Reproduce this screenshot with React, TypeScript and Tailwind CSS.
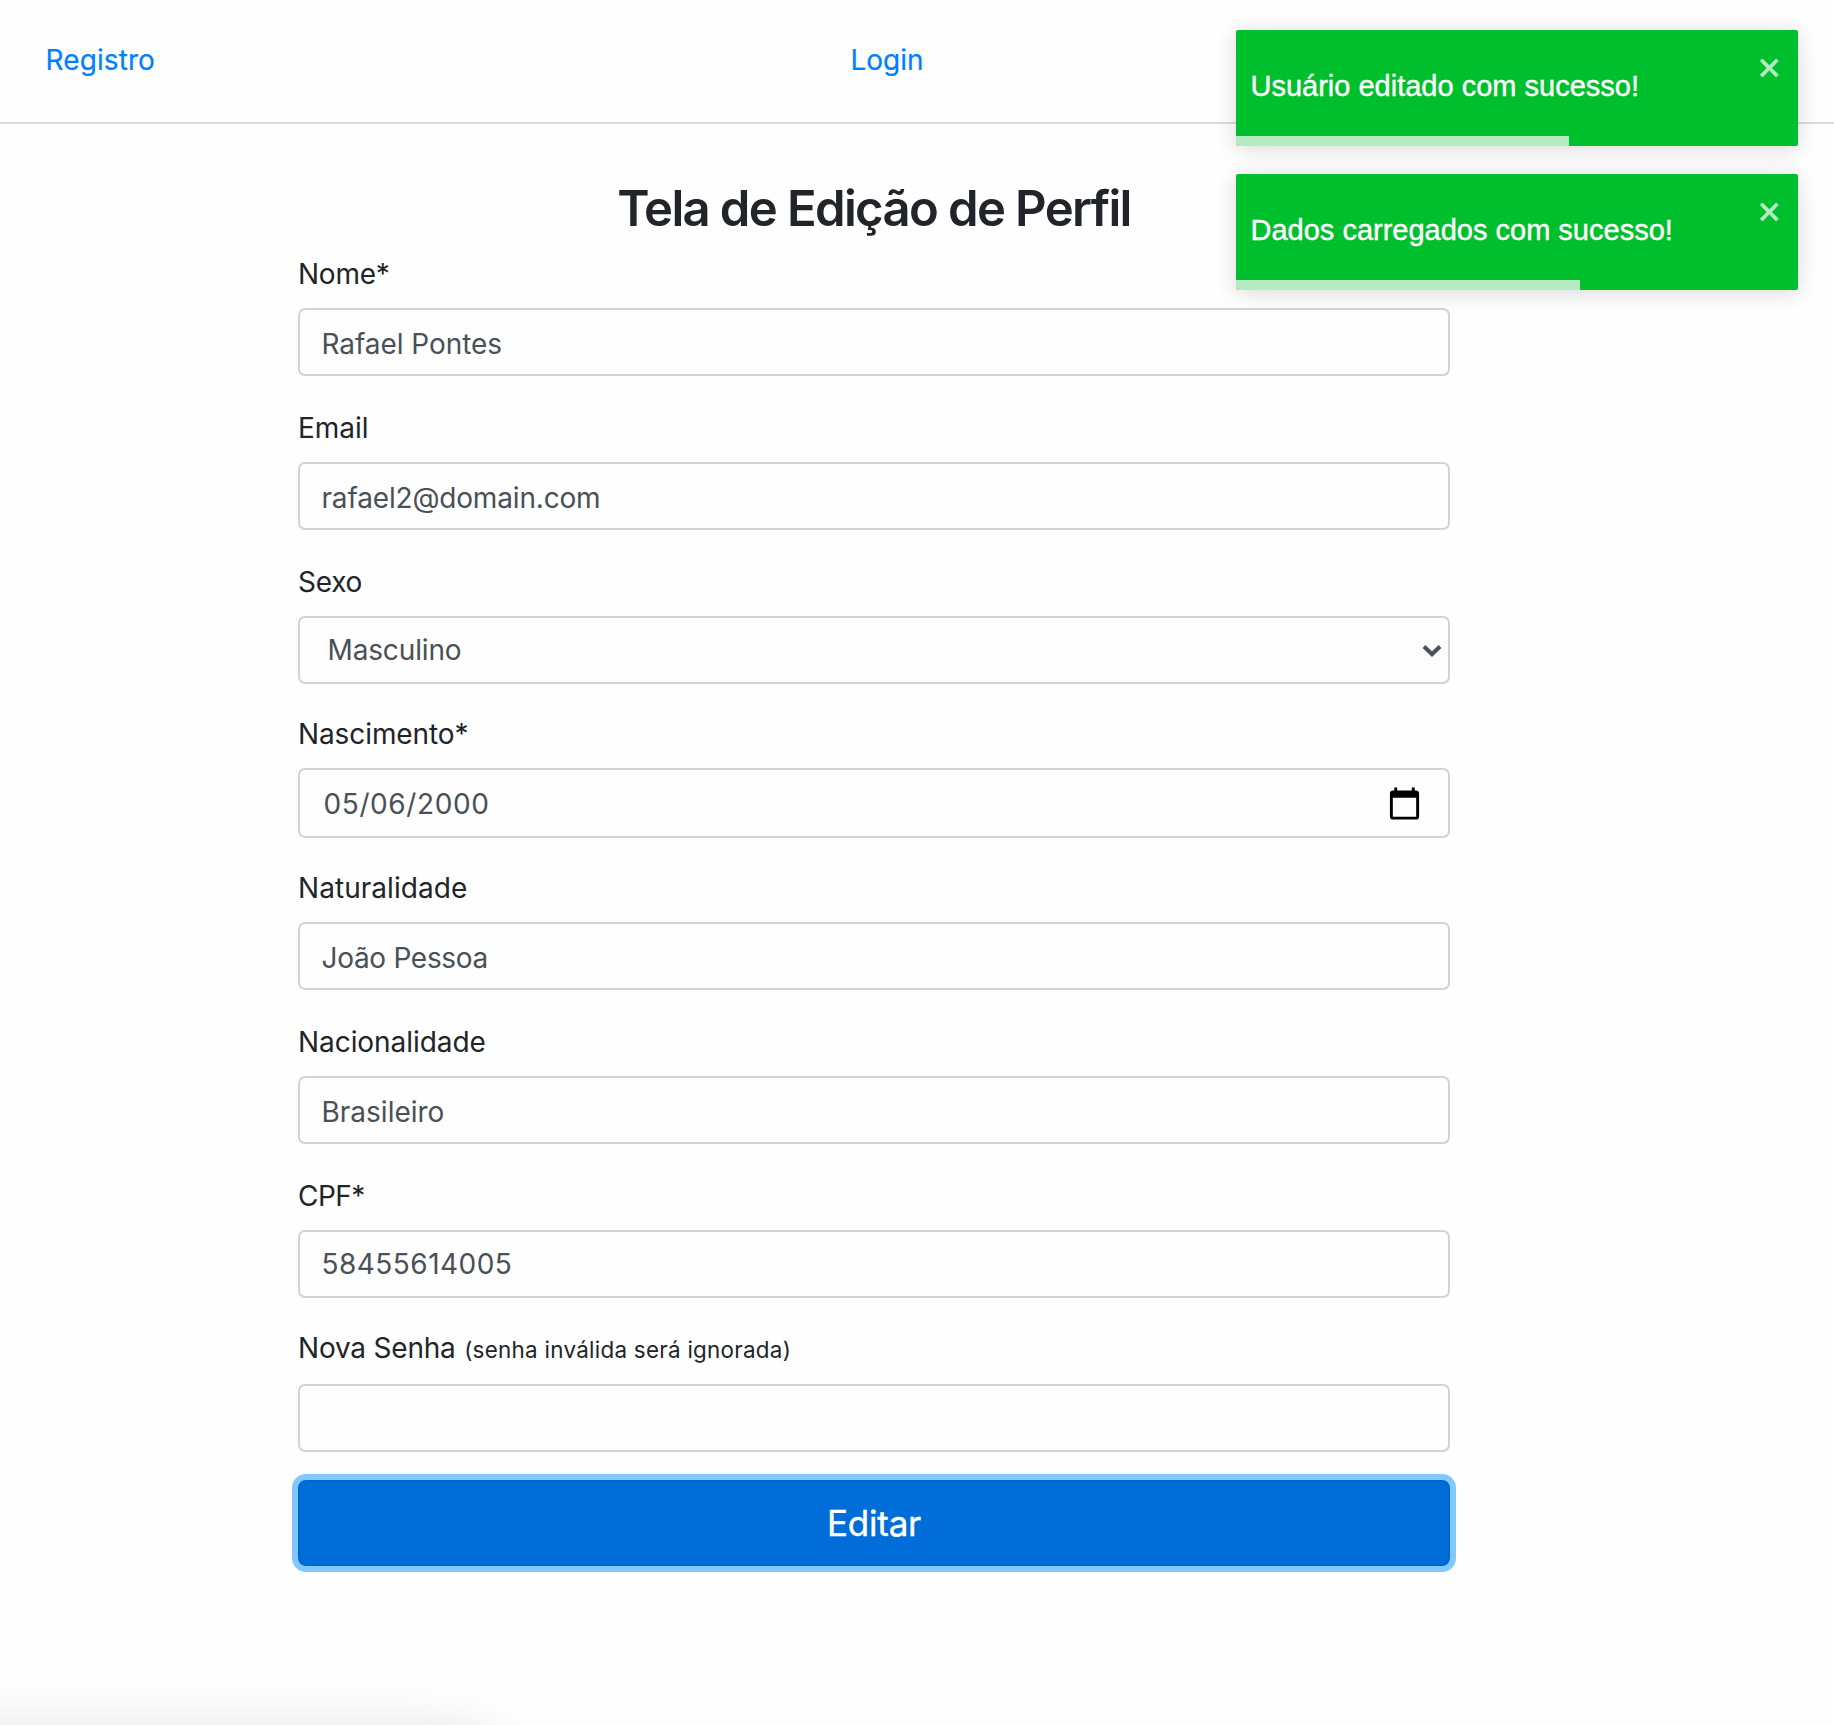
type Field = {
  label: string;
  note?: string;
  value: string;
  kind?: "select" | "date";
  labelClass: string;
  boxClass: string;
};

const fields: Field[] = [
  { label: "Nome*", value: "Rafael Pontes", labelClass: "mb-[13px] tracking-[-0.25px]", boxClass: "h-[68px] pt-[3px] mb-[31px] tracking-[-0.06px]" },
  { label: "Email", value: "rafael2@domain.com", labelClass: "mb-[13px]", boxClass: "h-[68px] pt-[3px] mb-[31px] tracking-[-0.17px]" },
  { label: "Sexo", value: "Masculino", kind: "select", labelClass: "mb-[13px] tracking-[-0.25px]", boxClass: "h-[68px] mb-[29px] pl-[27.5px] tracking-[-0.14px]" },
  { label: "Nascimento*", value: "05/06/2000", kind: "date", labelClass: "mb-[13px] tracking-[-0.1px]", boxClass: "h-[70px] pt-[2px] mb-[29px] pl-[23.5px] tracking-[0.6px]" },
  { label: "Naturalidade", value: "João Pessoa", labelClass: "mb-[13px] tracking-[0.05px]", boxClass: "h-[68px] pt-[3px] mb-[31px] tracking-[-0.3px]" },
  { label: "Nacionalidade", value: "Brasileiro", labelClass: "mb-[13px] tracking-[-0.06px]", boxClass: "h-[68px] pt-[3px] mb-[31px]" },
  { label: "CPF*", value: "58455614005", labelClass: "mb-[13px] tracking-[-0.5px]", boxClass: "h-[68px] mb-[29px] tracking-[0.47px]" },
  { label: "Nova Senha", note: "(senha inválida será ignorada)", value: "", labelClass: "mb-[15px] tracking-[-0.2px]", boxClass: "h-[68px] mb-[28px]" },
];

function CloseIcon() {
  return (
    <svg viewBox="0 0 14 16" className="h-[29px] w-[25.4px] fill-white opacity-70">
      <path d="M7.71 8.23l3.75 3.75-1.48 1.48-3.75-3.75-3.75 3.75L1 11.98l3.75-3.75L1 4.48 2.48 3l3.75 3.75L9.98 3l1.48 1.48-3.75 3.75z" />
    </svg>
  );
}

function ChevronIcon() {
  return (
    <svg viewBox="0 0 20 14" className="mr-[6px] mt-px h-[14px] w-5 fill-none stroke-[#495057]" strokeWidth="4">
      <path d="M2 2.5l8 7.8 8-7.8" />
    </svg>
  );
}

function CalendarIcon() {
  return (
    <svg viewBox="0 0 24 24" className="mb-[1.5px] mr-[26.5px] h-[35px] w-[35px] fill-black">
      <path d="M20 3h-1V1h-2v2H7V1H5v2H4c-1.1 0-2 .9-2 2v16c0 1.1.9 2 2 2h16c1.1 0 2-.9 2-2V5c0-1.1-.9-2-2-2zm0 18H4V8h16v13z" />
    </svg>
  );
}

function Toast({ text, barClass }: { text: string; barClass: string }) {
  return (
    <div className="relative flex h-[116px] items-start justify-between overflow-hidden rounded-[2px] bg-[#00bf2c] pl-[14.5px] pr-[14.5px]">
      <span className="mt-[35px] font-['Liberation_Sans',Arial,sans-serif] text-[29px] leading-[42px] text-white [-webkit-text-stroke:0.4px_white]">
        {text}
      </span>
      <button type="button" aria-label="close" className="mt-[22.5px]">
        <CloseIcon />
      </button>
      <div className={"absolute bottom-0 left-0 h-[10px] bg-white/70 " + barClass} />
    </div>
  );
}

export default function App() {
  return (
    <div className="relative h-[1725px] w-[1834px] overflow-hidden bg-[#fefefe] font-[Inter,sans-serif] text-[28px] leading-[42px] text-[#212529]">
      <header className="flex h-[124px] items-start border-b-2 border-[#dcdcdc] px-[45.5px] pt-[39px] text-[#007fff] [-webkit-text-stroke:0.2px_#007fff]">
        <a className="w-[805px] tracking-[0.1px]">Registro</a>
        <a>Login</a>
      </header>

      <main className="ml-[298px] w-[1152px] pt-[55px]">
        <h3 className="mb-[15px] text-center text-[49px] font-semibold leading-[59px] tracking-[-1.62px]">
          Tela de Edição de Perfil
        </h3>
        <form>
          {fields.map((f) => (
            <div key={f.label}>
              <label className={"flex h-[42px] items-baseline " + f.labelClass}>
                {f.label}
                {f.note && <small className="ml-[8.5px] text-[22.4px] tracking-[0.28px]">{f.note}</small>}
              </label>
              <div
                className={
                  "flex items-center rounded-[7px] border-2 border-[#ced4da] bg-[#fefefe] text-[#495057] " +
                  (f.kind ? "" : "pl-[21.5px] ") +
                  f.boxClass
                }
              >
                <span className="grow">{f.value}</span>
                {f.kind === "select" && <ChevronIcon />}
                {f.kind === "date" && <CalendarIcon />}
              </div>
            </div>
          ))}
          <button
            type="button"
            className="h-[86px] w-full rounded-[8px] border-2 border-[#0066cc] bg-[#006dd8] text-[35px] tracking-[-0.2px] text-white shadow-[0_0_0_6px_#80c8ff] [-webkit-text-stroke:0.4px_white]"
          >
            Editar
          </button>
        </form>
      </main>

      <aside className="absolute left-[1236px] top-[30px] flex w-[562px] flex-col gap-7">
        <div className="rounded-[2px] shadow-[0_2px_20px_rgba(0,0,0,0.1),0_4px_30px_rgba(0,0,0,0.05)]">
          <Toast text="Usuário editado com sucesso!" barClass="w-[333px]" />
        </div>
        <div className="rounded-[2px] shadow-[0_2px_20px_rgba(0,0,0,0.1),0_4px_30px_rgba(0,0,0,0.05)]">
          <Toast text="Dados carregados com sucesso!" barClass="w-[344px]" />
        </div>
      </aside>

      {/* Status bubble shadow rising from the lower-left corner */}
      <div className="absolute -left-24 top-[1747px] h-16 w-[582px] rounded-[20px] shadow-[0_0_64px_rgba(0,0,0,0.22)]" />
    </div>
  );
}
